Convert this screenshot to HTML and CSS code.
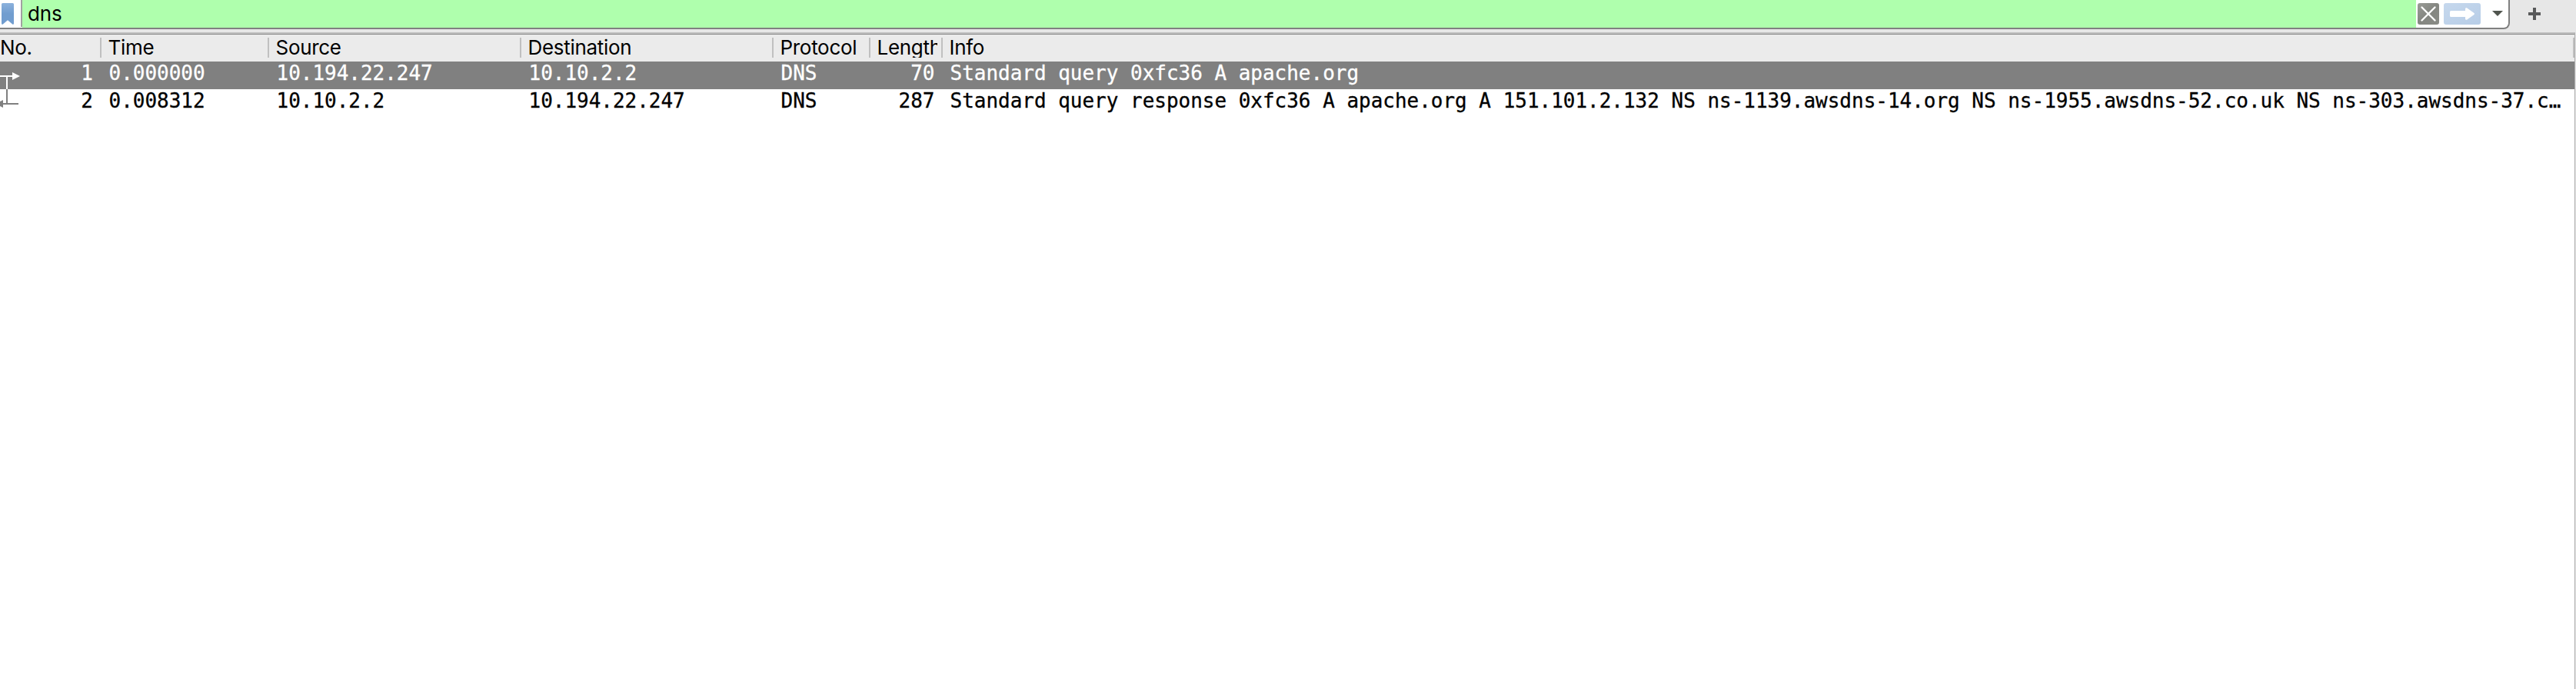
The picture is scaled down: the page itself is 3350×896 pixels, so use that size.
FILE: index.html
```
<!DOCTYPE html>
<html lang="en">
<head>
<meta charset="utf-8">
<title>Packet list</title>
<link rel="stylesheet" href="styles.css">
</head>
<body>
<div class="toolbar">
  <div class="filter">
    <div class="bookmark">
      <svg width="16" height="28" viewBox="0 0 16 28"><defs><linearGradient id="bm" x1="0" y1="0" x2="0" y2="1"><stop offset="0" stop-color="#8cb1dc"/><stop offset=".5" stop-color="#719dcf"/><stop offset="1" stop-color="#719dcf"/></linearGradient></defs><path d="M1.5 0H14.5Q16 0 16 1.5V26.5Q16 28 14.5 27.7L8 22.3L1.5 27.7Q0 28 0 26.5V1.5Q0 0 1.5 0Z" fill="url(#bm)"/></svg>
    </div>
    <div class="expression">dns</div>
    <div class="actions">
      <svg width="28" height="28" viewBox="0 0 28 28"><defs><linearGradient id="cl" x1="0" y1="0" x2="1" y2="1"><stop offset="0" stop-color="#9a9b97"/><stop offset=".5" stop-color="#848681"/><stop offset="1" stop-color="#8a8c87"/></linearGradient></defs><rect width="28" height="28" rx="3" fill="url(#cl)"/><path d="M5.5 5.5L22.5 22.5M22.5 5.5L5.5 22.5" stroke="#fff" stroke-width="2.4" stroke-linecap="round"/></svg>
      <svg width="48" height="28" viewBox="0 0 48 28"><defs><linearGradient id="ap" x1="0" y1="0" x2="1" y2="1"><stop offset="0" stop-color="#c6d8ed"/><stop offset="1" stop-color="#b7cde7"/></linearGradient></defs><rect width="48" height="28" rx="3" fill="url(#ap)"/><path d="M9.5 10H28V7.5Q28 6 30 6.3L39.5 13Q40.5 14 39.5 15L30 21.7Q28 22 28 20.5V18H9.5Q8 18 8 16.5V11.5Q8 10 9.5 10Z" fill="#fff"/></svg>
      <svg class="caret" width="14" height="7" viewBox="0 0 14 7"><path d="M0 0H14L7 7Z" fill="#50554e"/></svg>
    </div>
  </div>
  <svg class="add" width="16" height="16" viewBox="0 0 16 16"><path d="M6 0H10V6H16V10H10V16H6V10H0V6H6Z" fill="#58595a"/></svg>
</div>
<div class="packets">
  <div class="row head">
    <div class="no">No.</div><div>Time</div><div>Source</div><div>Destination</div><div>Protocol</div><div class="len"><span>Length</span></div><div>Info</div>
  </div>
  <div class="row selected">
    <div class="num"><svg width="28" height="36" viewBox="0 0 28 36"><path d="M0 19H16M9 19V36" stroke="#fff" stroke-width="2" fill="none"/><path d="M16 14L26 19L16 24Z" fill="#fff"/></svg><span>1</span></div><div>0.000000</div><div>10.194.22.247</div><div>10.10.2.2</div><div>DNS</div><div class="length">70</div><div>Standard query 0xfc36 A apache.org</div>
  </div>
  <div class="row">
    <div class="num"><svg width="28" height="36" viewBox="0 0 28 36"><path d="M9 0V18M2 19H24" stroke="#808080" stroke-width="2" fill="none"/><path d="M-6 19L4 14V24Z" fill="#808080"/></svg><span>2</span></div><div>0.008312</div><div>10.10.2.2</div><div>10.194.22.247</div><div>DNS</div><div class="length">287</div><div>Standard query response 0xfc36 A apache.org A 151.101.2.132 NS ns-1139.awsdns-14.org NS ns-1955.awsdns-52.co.uk NS ns-303.awsdns-37.c…</div>
  </div>
</div>
</body>
</html>
```
FILE: styles.css
```
* { box-sizing: border-box; }
html, body { margin: 0; height: 100%; }
body {
  display: flex;
  flex-direction: column;
  overflow: hidden;
  background: #e7e7e7;
  color: #000;
  font: 26px Inter, sans-serif;
}
svg { display: block; flex: none; }
.toolbar {
  display: flex;
  flex: none;
  height: 42px;
}
.filter {
  display: flex;
  width: 3264px;
  height: 38px;
  border-right: 2px solid #808080;
  border-bottom: 2px solid #808080;
  border-radius: 0 0 8px 0;
  background: #fff;
  overflow: hidden;
}
.bookmark {
  width: 29px;
  height: 35px;
  padding: 4px 0 0 2px;
  border-right: 2px solid #a0a0a0;
}
.expression {
  width: 3113px;
  padding-left: 7px;
  background: #afffad;
  line-height: 36px;
  letter-spacing: -0.2px;
}
.actions {
  display: flex;
  gap: 6px;
  padding: 4px 0 0 2px;
}
.caret { margin: 10px 0 0 9px; }
.add { margin: 10px 0 0 24px; }
.packets {
  flex: 1;
  width: 3349px;
  border-top: 2px solid #c0c0c0;
  border-right: 1px solid #acacac;
  background: #fff;
}
.row {
  display: grid;
  grid-template-columns: 132px 218px 328px 328px 126px 94px 1fr;
  height: 36px;
  font: 26px/30px "DejaVu Sans Mono", monospace;
  letter-spacing: -0.02px;
  -webkit-text-stroke: 0.3px currentColor;
  white-space: pre;
}
.row > div { padding-left: 9.5px; }
.head {
  height: 36px;
  padding-top: 4px;
  border-top: 1px solid #8c8c8c;
  background: #ebebeb;
  font: 26px/26px Inter, sans-serif;
  letter-spacing: -0.3px;
  -webkit-text-stroke: 0;
}
.head > div {
  height: 26px;
  padding-left: 8.5px;
  border-right: 2px solid #c0c0c0;
}
.head > .no { padding-left: 0; }
.len span {
  display: block;
  width: 78px;
  overflow: hidden;
}
.selected {
  background: #808080;
  color: #fff;
}
.row > .num {
  display: flex;
  justify-content: space-between;
  padding: 0 11px 0 0;
}
.row > .length {
  padding-right: 10.5px;
  text-align: right;
}
```
